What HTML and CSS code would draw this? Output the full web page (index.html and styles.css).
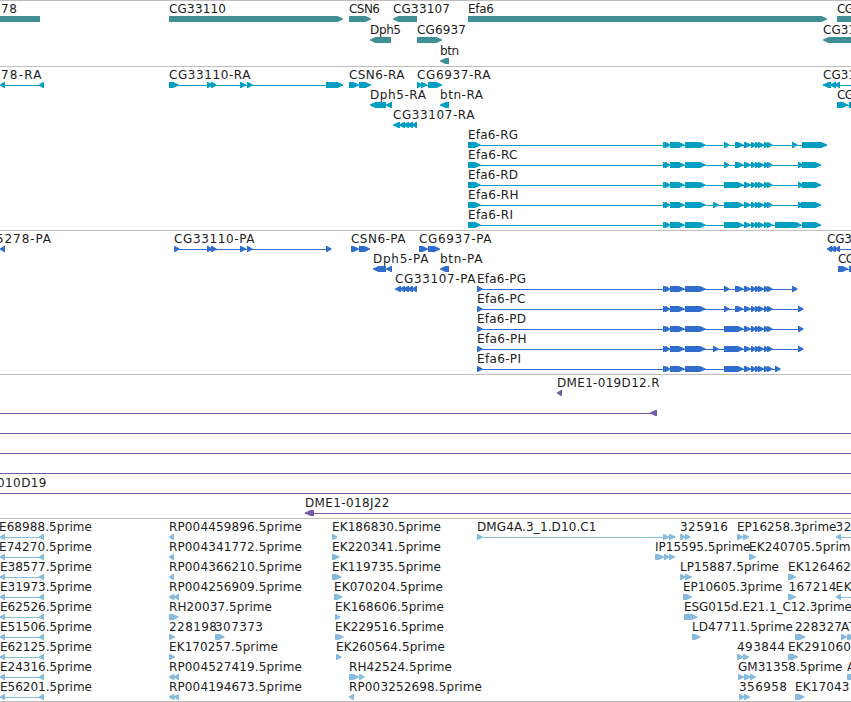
FILE: index.html
```html
<!DOCTYPE html>
<html lang="en">
<head>
    <meta charset="UTF-8">
    <meta name="viewport" content="width=device-width, initial-scale=1.0">
    <title>Genome Browser</title>
    <link rel="stylesheet" href="styles.css">
</head>
<body>
    <main class="browser">
        <section class="track genes" id="genes"></section>
        <section class="track transcripts" id="transcripts"></section>
        <section class="track proteins" id="proteins"></section>
        <section class="track clones" id="clones"></section>
        <section class="track ests" id="ests"></section>
    </main>
    <script src="tracks.js"></script>
</body>
</html>
```
FILE: styles.css
```css
/* General Styles */
body, html {
    margin: 0;
    padding: 0;
}

body {
    width: 851px;
    height: 702px;
    overflow: hidden;
    background-color: #fff;
    font-family: "DejaVu Sans", sans-serif;
    font-size: 12px;
}

.browser {
    display: flex;
    flex-direction: column;
    border-bottom: 1px solid #bebebe;
}

/* Track Styles */
.track {
    border-top: 1px solid #bebebe;
    padding-bottom: 3px;
}

.row {
    display: block;
    width: 851px;
    height: 20px;
    overflow: visible;
}

.label {
    fill: #1c1c1c;
}

.block, .intron {
    fill: currentColor;
}

/* Track Colors */
.genes {
    color: #3f8f94;
    padding-bottom: 2px;
}

.genes .row {
    height: 21px;
}

.transcripts {
    color: #009fc1;
}

.proteins {
    color: #306dcd;
}

.clones {
    color: #755aa7;
}

.ests {
    color: #86bbdd;
    padding-bottom: 2px;
}
```
FILE: tracks.js
```js
// Each feature is [label, x, label width, blocks, line start, line end]
// Blocks are written as direction + start-end, in pixels
var efaStart = ">663-668 >665-670 >670-684.5 >685-705.5 ";
var efaMid = ">744-751 >751-756 >755-760 >758-764 >764-769 >767-772.5 ";
var shortExons = ">724-729.5 >735-743.5 ";
var longExon = ">724-743.5 ";

function efaR(name, width, exons) {
    return [[name, 468, width, ">468-480.5 " + efaStart + exons, 468, 821]];
}

function efaP(name, width, exons, end) {
    return ["Efa6-" + name, 477, width, ">477-482.5 " + efaStart + exons, 477, end];
}

function left(name, x) {
    return [name, x, 92 - x, "<0-5 <39-44", 0, 44];
}

var tracks = {
    genes: [
        [["78", 1, 16, "<-20-40"], ["CG33110", 169, 57, ">169-343"], ["CSN6", 349, 31, ">349-371"],
         ["CG33107", 393, 57, "<393-417"], ["Efa6", 468, 26, ">468-827"], ["CG", 837, 17, ">837-900"]],
        [["Dph5", 370, 31, "<370-391"], ["CG6937", 417, 49, ">417-442"], ["CG31", 823, 33, "<823-900"]],
        [["btn", 440, 19, "<440-449"]]
    ],
    transcripts: [
        [["78-RA", 1, 40.5, "<0-5 <39-44", 0, 44],
         ["CG33110-RA", 169, 81.5, ">169-178.5 >207-212.5 >211-216.5 >240-246 >247-252.5 >326-343", 169, 343],
         ["CSN6-RA", 349, 55.5, ">349-359 >359-371"],
         ["CG6937-RA", 417, 73.5, ">417-422 >421-427 >428-442", 417, 442],
         ["CG31", 823, 33, "<823-831 <830-836 <835-840", 823, 851]],
        [["Dph5-RA", 370, 56, "<370-386 <386-392"], ["btn-RA", 440, 43, "<440-449"], ["CG", 837, 17, ">837-848 >849-870", 837, 851]],
        [["CG33107-RA", 393, 81.5, "<393-400 <399-405 <403-409 <407-413 <412-417"]],
        [["Efa6-RG", 468, 50, ">468-480.5 " + efaStart + shortExons + efaMid + ">792-797.5 >802-827", 468, 827]],
        efaR("Efa6-RC", 49.5, shortExons + efaMid + ">798-803 >802-821"),
        efaR("Efa6-RD", 50, longExon + efaMid + ">798-803 >802-821"),
        efaR("Efa6-RH", 50.5, ">713-718.5 " + longExon + efaMid + ">798-803 >801-821"),
        efaR("Efa6-RI", 45, longExon + efaMid + ">775-801.5 >802-821")
    ],
    proteins: [
        [["5278-PA", -4, 55, "<0-5"],
         ["CG33110-PA", 174, 80.5, ">174-179.5 >207-212.5 >211-216.5 >240-246 >247-252.5 >326-331.5", 174, 331],
         ["CSN6-PA", 351, 54.5, ">351-359 >359-370"],
         ["CG6937-PA", 419, 72.5, ">419-428 >428-440"],
         ["CG3", 827, 25, "<827-832 <830-836 <835-840", 827, 851]],
        [["Dph5-PA", 373, 55.5, "<373-386 <386-392"], ["btn-PA", 440, 42.5, "<440-449"], ["CG", 838, 17, ">838-848 >849-870", 838, 851]],
        [["CG33107-PA", 395, 80.5, "<395-401 <400-405 <403-409 <407-413 <412-417"],
         efaP("PG", 49, shortExons + efaMid + ">792-797.5", 797)],
        [efaP("PC", 48.5, shortExons + efaMid + ">798-803.5", 803)],
        [efaP("PD", 49, longExon + efaMid + ">798-803.5", 803)],
        [efaP("PH", 49.5, ">713-718.5 " + longExon + efaMid + ">798-803.5", 803)],
        [efaP("PI", 44, longExon + efaMid + ">775-780.5", 780)]
    ],
    clones: [
        [["DME1-019D12.R", 557, 102.5, "<557-562"]],
        [["", 0, 0, "<650-657", 0, 657]],
        [["", 0, 0, "", 0, 851]],
        [["", 0, 0, "", 0, 851]],
        [["", 0, 0, "", 0, 851]],
        [["010D19", -3, 49.5, "", 0, 851]],
        [["DME1-018J22", 305, 84.5, "<305-314", 305, 851]]
    ],
    ests: [
        [left("E68988.5prime", -1), ["RP004459896.5prime", 169, 133, "<169-174"],
         ["EK186830.5prime", 332, 109, ">332-337.5"],
         ["DMG4A.3_1.D10.C1", 477, 119.5, ">477-482.5 >663-669 >669-675.5", 477, 675],
         ["325916", 680, 48, ">680-685.5 >685-690.5"], ["EP16258.3prime", 737, 99.5, ">737-743 >743-749"],
         ["32", 835.5, 16, "<836-841", 836, 851]],
        [left("E74270.5prime", -1), ["RP004341772.5prime", 169, 133, "<169-174"],
         ["EK220341.5prime", 332, 109, ">332-339.5"],
         ["IP15595.5prime", 655, 95.5, ">655-664 >664-670 >669-675"], ["EK240705.5prime", 749, 109, ">749-756"]],
        [left("E38577.5prime", 0), ["RP004366210.5prime", 169, 133, "<169-174"],
         ["EK119735.5prime", 332, 109, ">332-341.5"],
         ["LP15887.5prime", 680, 99, ">680-686 >685-692"], ["EK126462", 788, 63, ">788-796"]],
        [left("E31973.5prime", 0), ["RP004256909.5prime", 169, 133, "<169-174.5 <174-179"],
         ["EK070204.5prime", 334, 109, ">334-342.5"],
         ["EP10605.3prime", 683, 99.5, ">683-692"], ["167214", 788.5, 48, ">788-796"], ["EK", 835.5, 16, "<836-841", 836, 851]],
        [left("E62526.5prime", 0), ["RH20037.5prime", 169, 103, ">169-178.5"],
         ["EK168606.5prime", 335, 109, ">335-340.5"],
         ["ESG015d.E21.1_C12.3prime", 684, 168, ">684-697.5"]],
        [left("E51506.5prime", 0), ["228198", 169, 48, ">169-175"], ["307373", 215, 48, ">215-224.5"],
         ["EK229516.5prime", 335, 109, ">335-343.5"],
         ["LD47711.5prime", 692, 101, ">692-700.5"], ["228327", 795, 47, ">795-805.5"], ["AT", 841, 15, ">841-847 >847-855"]],
        [left("E62125.5prime", 0), ["EK170257.5prime", 169, 109, ">169-175"],
         ["EK260564.5prime", 336, 109, ">336-341.5"],
         ["493844", 737, 48, ">737-743 >743-749"], ["EK291060", 788, 63, ">788-798"]],
        [left("E24316.5prime", 0), ["RP004527419.5prime", 169, 133, "<169-174.5 <174-179"],
         ["RH42524.5prime", 349, 103, ">349-359 >359-364.5"],
         ["GM31358.5prime", 738, 104.5, ">738-744 >744-751 >750-756"], ["A", 847, 8, ">847-860"]],
        [left("E56201.5prime", 0), ["RP004194673.5prime", 169, 133, "<169-174.5 <174-179"],
         ["RP003252698.5prime", 349, 133, "<349-354"],
         ["356958", 739, 48, ">739-745 >744-750"], ["EK17043", 795, 54.5, ">795-804.5"]]
    ]
};

function drawBlock(text) {
    var match = text.match(/^([<>])(-?[\d.]+)-([\d.]+)$/);
    var start = parseFloat(match[2]);
    var end = parseFloat(match[3]);
    var tip = Math.min(5.5, end - start - 1);
    var points;
    if (match[1] === ">") {
        points = [start, 15, end - tip, 15, end, 17.5, end, 18.5, end - tip, 21, start, 21];
    } else {
        points = [end, 15, start + tip, 15, start, 17.5, start, 18.5, start + tip, 21, end, 21];
    }
    return '<polygon class="block" points="' + points.join(" ") + '"/>';
}

function drawFeature(feature) {
    var svg = "";
    if (feature[5]) {
        svg += '<rect class="intron" x="' + feature[4] + '" y="18" width="' + (feature[5] - feature[4]) + '" height="1"/>';
    }
    if (feature[3]) {
        svg += feature[3].trim().split(" ").map(drawBlock).join("");
    }
    if (feature[0]) {
        svg += '<text class="label" x="' + feature[1] + '" y="12" textLength="' + feature[2] + '">' + feature[0] + '</text>';
    }
    return svg;
}

Object.keys(tracks).forEach(function (id) {
    document.getElementById(id).innerHTML = tracks[id].map(function (row) {
        return '<svg class="row">' + row.map(drawFeature).join("") + '</svg>';
    }).join("");
});
```
